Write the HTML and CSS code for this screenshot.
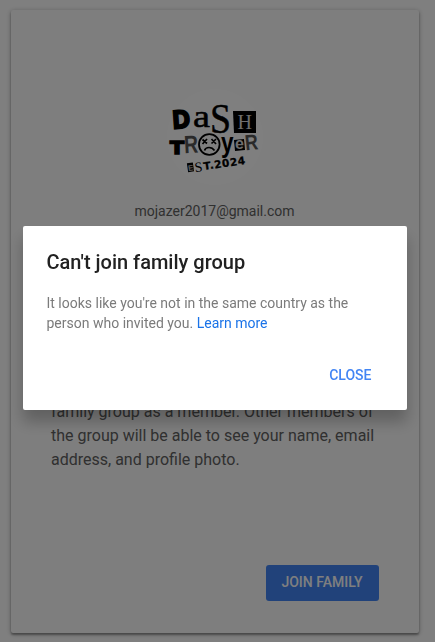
FILE: index.html
```html
<!DOCTYPE html>
<html lang="en">
<head>
    <meta charset="UTF-8">
    <meta name="viewport" content="width=device-width, initial-scale=1.0">
    <title>Join family group</title>
    <link rel="stylesheet" href="styles.css">
</head>
<body>
    <div class="card">
        <svg class="avatar" width="120" height="100" viewBox="0 0 120 100">
            <circle cx="60" cy="52" r="48" fill="#fff"/>
            <g class="heavy" stroke="#000" stroke-width="1.500">
                <text x="17" y="43.500" font-size="25" textLength="18.500" lengthAdjust="spacingAndGlyphs" transform="rotate(-4 26 35)">D</text>
                <text x="15" y="68.500" font-size="18" textLength="14" lengthAdjust="spacingAndGlyphs">T</text>
            </g>
            <g class="serif" stroke="#000" stroke-width="0.500">
                <text x="38" y="42" font-size="32" textLength="17" lengthAdjust="spacingAndGlyphs">a</text>
                <text x="55" y="48" font-size="42" textLength="21" lengthAdjust="spacingAndGlyphs">S</text>
            </g>
            <path d="M78 26h23v22H79z"/>
            <text class="serif" x="82.500" y="44" font-size="20" fill="#ddd">H</text>
            <g class="sans" fill="#555">
                <text x="29" y="68" font-size="25" textLength="14" lengthAdjust="spacingAndGlyphs" transform="rotate(-3 35 60)">R</text>
                <text x="90" y="65" font-size="22" textLength="13" lengthAdjust="spacingAndGlyphs" transform="rotate(-6 96 57)">R</text>
            </g>
            <circle cx="54.300" cy="59.500" r="10.300" fill="none" stroke="#000" stroke-width="1.800"/>
            <path d="M47.500 54.500l4.500 4M52 54l-4.500 5M56.500 54l4.500 5M61 54l-4.500 4.500M49.500 65.500q1-3 4.500-3t5.500 3" fill="none" stroke="#000" stroke-width="1.700"/>
            <text class="sans" x="66" y="67" font-size="27" textLength="12.500" lengthAdjust="spacingAndGlyphs">y</text>
            <path d="M79 55l10-1 1 11-10 1z"/>
            <text class="sans" x="80" y="64" font-size="16" fill="#ddd">e</text>
            <g transform="rotate(-8 34 86)">
                <path d="M33 78h6v9h-6z"/>
                <text class="sans" x="33.500" y="86" font-size="8" fill="#bbb">E</text>
                <text class="serif" x="40" y="88" font-size="14">S</text>
                <text class="heavy" x="49" y="87" font-size="10.500" stroke="#000" stroke-width="0.300" textLength="42" lengthAdjust="spacing">T.2024</text>
            </g>
        </svg>
        <p class="email">mojazer2017@gmail.com</p>
        <p class="info">family group as a member. Other members of the group will be able to see your name, email address, and profile photo.</p>
        <button class="join">JOIN FAMILY</button>
    </div>
    <div class="overlay">
        <div class="dialog">
            <h1 class="title">Can't join family group</h1>
            <p class="message">It looks like you're not in the same country as the person who invited you. <a class="link">Learn more</a></p>
            <button class="close">CLOSE</button>
        </div>
    </div>
</body>
</html>
```
FILE: styles.css
```css
body{
    box-sizing: border-box;
    height: 100vh;
    margin: 0;
    padding: 10px 0 0 11px;
    background-color: white;
    font-family: Roboto, Arial, sans-serif;
}
.card{
    box-sizing: border-box;
    width: 408px;
    height: 623px;
    padding: 75px 40px 32px;
    display: flex;
    flex-direction: column;
    background-color: #fcfcfc;
    border-radius: 2px;
    box-shadow: 0 2px 2px rgba(0,0,0,0.3), 0 1px 5px rgba(0,0,0,0.3);
}
.avatar{
    flex: none;
    align-self: center;
}
.heavy{
    font-family: "DejaVu Sans", sans-serif;
    font-weight: bold;
}
.serif{
    font-family: "Liberation Serif", serif;
}
.sans{
    font-family: "Liberation Sans", sans-serif;
    font-weight: bold;
}
.email{
    margin: 16px 1px 0 0;
    text-align: center;
    font-size: 14px;
    line-height: 20px;
    color: #616161;
}
.info{
    margin: 179px 0 0;
    font-size: 16px;
    line-height: 24px;
    color: #616161;
}
.join{
    width: 113px;
    height: 36px;
    margin-top: auto;
    align-self: flex-end;
    padding: 0 1px 2px 0;
    border: none;
    border-radius: 3px;
    background-color: #4285f4;
    color: white;
    font-family: inherit;
    font-size: 14px;
    font-weight: 500;
}
.overlay{
    position: fixed;
    inset: 0;
    box-sizing: border-box;
    padding: 226px 28px 0 23px;
    background-color: rgba(0,0,0,0.5);
}
.dialog{
    box-sizing: border-box;
    height: 184px;
    padding: 24px 24px 24px 23.5px;
    display: flex;
    flex-direction: column;
    background-color: white;
    border-radius: 2px;
    box-shadow: 0 12px 15px rgba(0,0,0,0.24);
}
.title{
    margin: 0;
    font-size: 20px;
    line-height: 24px;
    font-weight: 500;
    color: #212121;
}
.message{
    margin: 19px 0 0;
    font-size: 14px;
    line-height: 20px;
    color: #7b7b7b;
}
.link{
    color: #1a73e8;
}
.close{
    margin-top: 24px;
    align-self: flex-end;
    height: 36px;
    flex: none;
    padding: 0 11.5px;
    border: none;
    background: none;
    color: #4285f4;
    font-family: inherit;
    font-size: 14px;
    font-weight: 500;
}
```
